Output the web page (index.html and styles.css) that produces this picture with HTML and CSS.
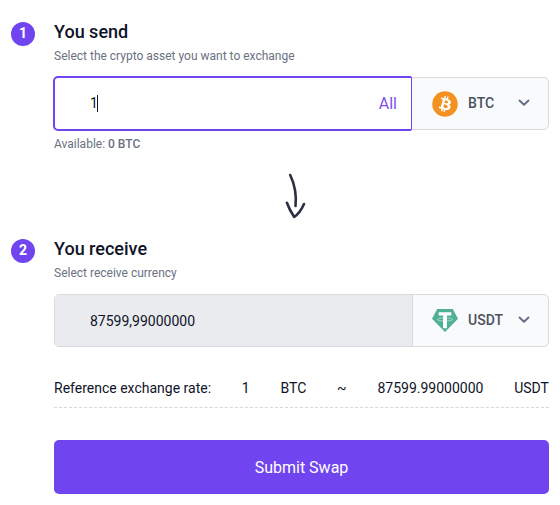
FILE: index.html
```html
<!DOCTYPE html>
<html lang="en">
<head>
<meta charset="utf-8">
<title>Swap</title>
<link rel="stylesheet" href="styles.css">
</head>
<body>
<main class="swap">
  <section class="step">
    <span class="badge">1</span>
    <div class="content">
      <h2>You send</h2>
      <p class="hint">Select the crypto asset you want to exchange</p>
      <div class="field">
        <div class="amount focused"><span class="value">1</span><span class="caret"></span><span class="all">All</span></div>
        <div class="currency">
          <svg class="coin" viewBox="0 0 32 32"><circle cx="16" cy="16" r="15.700" fill="#f39220"/><path fill="#fff" d="M23.189 14.02c.314-2.096-1.283-3.223-3.465-3.975l.708-2.84-1.728-.43-.69 2.765c-.454-.114-.92-.22-1.385-.326l.695-2.783L15.596 6l-.708 2.839c-.376-.086-.746-.17-1.104-.26l.002-.009-2.384-.595-.46 1.846s1.283.294 1.256.312c.7.175.826.638.805 1.006l-.806 3.235c.048.012.11.03.18.057l-.183-.045-1.13 4.532c-.086.212-.303.531-.793.41.018.025-1.256-.313-1.256-.313l-.858 1.978 2.25.561c.418.105.828.215 1.231.318l-.715 2.872 1.727.43.708-2.84c.472.127.93.245 1.378.357l-.706 2.828 1.728.43.715-2.866c2.948.558 5.164.333 6.097-2.333.752-2.146-.037-3.385-1.588-4.192 1.13-.26 1.98-1.003 2.207-2.538zm-3.95 5.538c-.533 2.147-4.148.986-5.32.695l.95-3.805c1.172.293 4.929.872 4.37 3.11zm.535-5.569c-.487 1.953-3.495.96-4.47.717l.86-3.45c.975.243 4.118.696 3.61 2.733z"/></svg>
          <span class="code">BTC</span>
          <svg class="chevron" viewBox="0 0 12 8"><path d="M1.500 1.500 6 5.700l4.500-4.200"/></svg>
        </div>
      </div>
      <p class="available">Available: <b>0 BTC</b></p>
    </div>
  </section>

  <svg class="arrow" viewBox="0 0 24 48"><path d="M5.200 3C9 11 12 20 10.500 34M1.900 30.800Q4.500 38 9.200 45Q15 41 19 32"/></svg>

  <section class="step">
    <span class="badge">2</span>
    <div class="content">
      <h2>You receive</h2>
      <p class="hint">Select receive currency</p>
      <div class="field">
        <div class="amount readonly"><span class="value">87599,99000000</span></div>
        <div class="currency">
          <svg class="coin" viewBox="0 0 26 26"><path fill="#50af95" d="M5.200 1h15.600L26 10.800 13 24 0 10.800z"/><ellipse cx="13" cy="11.500" rx="7.700" ry="1.600" fill="none" stroke="#fff" stroke-opacity=".8" stroke-width=".6"/><path fill="#fff" d="M6.700 4.300h12.600v3.200h-4.400v12.800h-3.800V7.500H6.700z"/></svg>
          <span class="code">USDT</span>
          <svg class="chevron" viewBox="0 0 12 8"><path d="M1.500 1.500 6 5.700l4.500-4.200"/></svg>
        </div>
      </div>
      <div class="rate"><span>Reference exchange rate:</span><span>1</span><span>BTC</span><span>~</span><span>87599.99000000</span><span>USDT</span></div>
      <button class="submit">Submit Swap</button>
    </div>
  </section>
</main>
</body>
</html>
```
FILE: styles.css
```css
* { box-sizing: border-box; }
body { margin: 0; background: #fff; color: #0f1428; font-family: Roboto, sans-serif; }
h2, p { margin: 0; }
.swap { width: 549px; padding: 20px 0 0 11px; display: flex; flex-direction: column; }
.step { display: flex; gap: 19px; }
.badge { flex: none; width: 24px; height: 24px; margin-top: 2px; border-radius: 50%; background: #7045f0; color: #fff; font-size: 14px; font-weight: 700; line-height: 23px; text-align: center; }
.content { width: 495px; }
h2 { font-size: 18px; font-weight: 500; line-height: 24px; }
.hint { margin-top: 4px; font-size: 12px; line-height: 16px; color: #6a7180; }
.field { display: flex; height: 53px; margin-top: 13px; border: 1px solid #d9dadd; border-radius: 5px; background: #f9fafc; }
.amount { display: flex; align-items: center; width: 358px; padding-left: 35px; font-size: 14px; border-right: 1px solid #d9dadd; }
.focused { width: 359px; margin: -2px 1px -2px -2px; padding: 0 14px 1px 35px; border: 2px solid #7045f0; border-right-width: 1px; border-radius: 5px 2px 2px 5px; background: #fff; }
.readonly { background: #eaebef; border-radius: 4px 0 0 4px; }
.caret { width: 1px; height: 17px; margin-left: -1px; background: #0f1428; }
.all { margin-left: auto; font-size: 16px; color: #7d52ee; }
.currency { flex: 1; display: flex; align-items: center; padding: 0 18px 1px 19px; }
.coin { width: 26px; height: 26px; margin: 1px 10px 0 0; }
.code { font-size: 14px; font-weight: 500; color: #4c515d; }
.chevron { width: 12px; height: 8px; margin-left: auto; fill: none; stroke: #66708a; stroke-width: 2; stroke-linecap: round; stroke-linejoin: round; }
.available { margin-top: 6px; font-size: 12px; line-height: 16px; color: #6a7180; }
.available b { font-weight: 500; }
.arrow { width: 24px; height: 48px; margin: 20px 0 17px 274px; fill: none; stroke: #2b3044; stroke-width: 2.6; stroke-linecap: round; stroke-linejoin: round; }
.rate { display: flex; justify-content: space-between; height: 33px; margin-top: 28px; padding-top: 3px; border-bottom: 1px dashed #d6d7da; font-size: 14px; line-height: 20px; white-space: nowrap; }
.submit { display: block; width: 100%; height: 54px; margin-top: 32px; padding: 1px 0 0; border: 0; border-radius: 5px; background: #7045f0; color: #fff; font: 400 16px/53px Roboto, sans-serif; }
```
